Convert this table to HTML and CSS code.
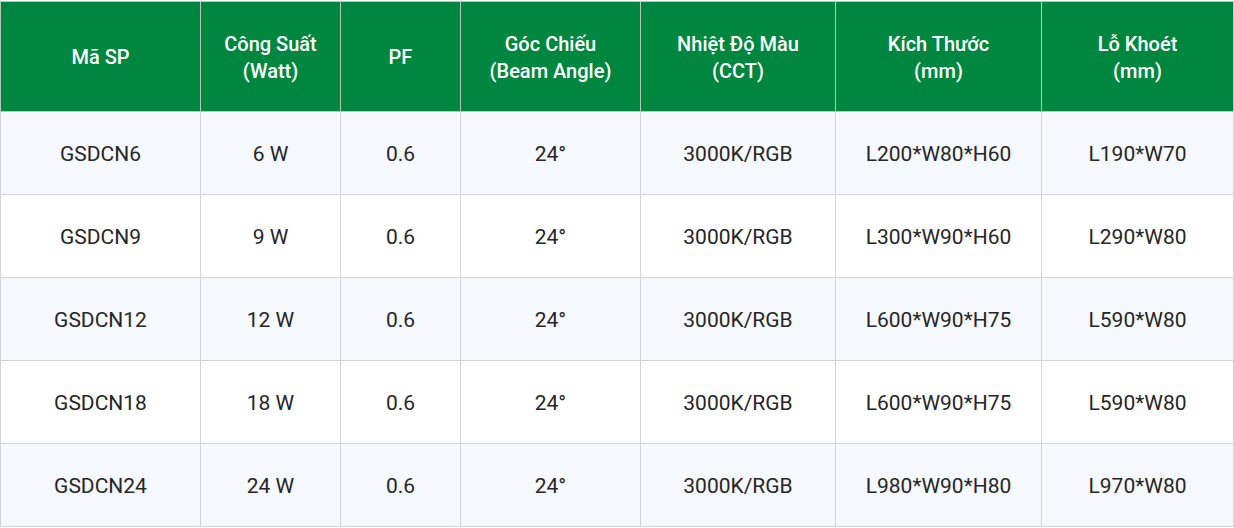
FILE: index.html
```html
<!DOCTYPE html>
<html lang="vi">
<head>
<meta charset="utf-8">
<link rel="stylesheet" href="styles.css">
</head>
<body>
<table class="spec">
<colgroup>
<col class="c1"><col class="c2"><col class="c3"><col class="c4"><col class="c5"><col class="c6"><col class="c7">
</colgroup>
<thead>
<tr>
<th>Mã SP</th>
<th>Công Suất<br>(Watt)</th>
<th>PF</th>
<th>Góc Chiếu<br>(Beam Angle)</th>
<th>Nhiệt Độ Màu<br>(CCT)</th>
<th>Kích Thước<br>(mm)</th>
<th>Lỗ Khoét<br>(mm)</th>
</tr>
</thead>
<tbody>
<tr><td>GSDCN6</td><td>6 W</td><td>0.6</td><td>24°</td><td>3000K/RGB</td><td>L200*W80*H60</td><td>L190*W70</td></tr>
<tr><td>GSDCN9</td><td>9 W</td><td>0.6</td><td>24°</td><td>3000K/RGB</td><td>L300*W90*H60</td><td>L290*W80</td></tr>
<tr><td>GSDCN12</td><td>12 W</td><td>0.6</td><td>24°</td><td>3000K/RGB</td><td>L600*W90*H75</td><td>L590*W80</td></tr>
<tr><td>GSDCN18</td><td>18 W</td><td>0.6</td><td>24°</td><td>3000K/RGB</td><td>L600*W90*H75</td><td>L590*W80</td></tr>
<tr><td>GSDCN24</td><td>24 W</td><td>0.6</td><td>24°</td><td>3000K/RGB</td><td>L980*W90*H80</td><td>L970*W80</td></tr>
</tbody>
</table>
</body>
</html>
```

FILE: styles.css
```css
html, body {
  margin: 0;
  padding: 0;
  background: #ffffff;
}
body {
  padding-top: 1px;
  font-family: Roboto, "Liberation Sans", Arial, sans-serif;
}
.spec {
  width: 1233px;
  border-collapse: collapse;
  table-layout: fixed;
  font-size: 21px;
  line-height: 27px;
}
.c1 { width: 200px; }
.c2 { width: 140px; }
.c3 { width: 120px; }
.c4 { width: 180px; }
.c5 { width: 195px; }
.c6 { width: 206px; }
.c7 { width: 192px; }
.spec th {
  background: #00873f;
  color: #ffffff;
  font-size: 20px;
  font-weight: 500;
  height: 107px;
  padding: 2px 0 0;
  border: 1px solid #b7c9bc;
  text-align: center;
  vertical-align: middle;
}
.spec td {
  height: 80px;
  padding: 2px 0 0;
  border: 1px solid #d4d4d9;
  text-align: center;
  vertical-align: middle;
  color: #262626;
  font-weight: 400;
}
.spec tbody tr:nth-child(odd) td {
  background: #f5f8fc;
}
.spec tbody tr:nth-child(even) td {
  background: #ffffff;
}
```
